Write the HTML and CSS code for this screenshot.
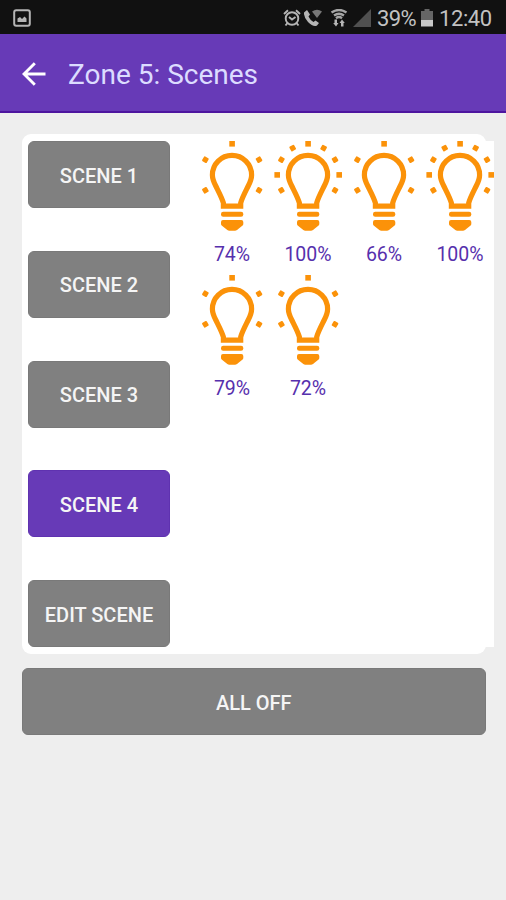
FILE: index.html
```html
<!DOCTYPE html>
<html lang="en">
<head>
    <meta charset="UTF-8">
    <meta name="viewport" content="width=device-width, initial-scale=1.0">
    <title>Zone 5: Scenes</title>
    <link rel="stylesheet" href="styles.css">
</head>
<body>

    <!-- shared bulb shapes -->
    <svg class="sprite" width="0" height="0">
        <symbol id="bulb" viewBox="0 0 76 92">
            <path d="M29.4 65.200V62C28 57 24.500 50.500 21.800 45Q18.400 38.500 18.400 34A19.600 19.600 0 0 1 57.600 34Q57.600 38.500 54.200 45C51.500 50.500 48 57 46.700 62V65.200Z" fill="none" stroke="#fb9209" stroke-width="5.2"/>
            <rect x="27" y="70.700" width="22.300" height="5" rx="2.200"/>
            <path d="M29 79H47.300Q49.300 79 49.300 81V83Q49.300 84 48.300 84.800L43 89Q42 89.800 41 89.800H35.300Q34.300 89.800 33.300 89L28 84.800Q27 84 27 83V81Q27 79 29 79Z"/>
            <rect x="35.300" y="0" width="5.600" height="5.600"/>
            <rect x="8.700" y="16" width="5.400" height="5.400" rx="1" transform="rotate(30 11.400 18.700)"/>
            <rect x="62.300" y="16" width="5.400" height="5.400" rx="1" transform="rotate(60 65 18.700)"/>
            <rect x="8.700" y="46.600" width="5.400" height="5.400" rx="1" transform="rotate(60 11.400 49.300)"/>
            <rect x="62.300" y="46.600" width="5.400" height="5.400" rx="1" transform="rotate(30 65 49.300)"/>
        </symbol>
        <symbol id="bulb-full" viewBox="0 0 76 92">
            <use href="#bulb" width="76" height="92"/>
            <rect x="20" y="4.400" width="5.400" height="5.400" rx="1" transform="rotate(60 22.700 7.100)"/>
            <rect x="50.900" y="4.400" width="5.400" height="5.400" rx="1" transform="rotate(30 53.600 7.100)"/>
            <rect x="4.400" y="31.100" width="5.600" height="5.600"/>
            <rect x="66.400" y="31.100" width="5.600" height="5.600"/>
        </symbol>
    </svg>

    <div class="status-bar">
        <svg class="icon-picture" width="18" height="18" viewBox="0 0 18 18">
            <rect x="1.200" y="1.200" width="15.600" height="15.600" rx="2" fill="none" stroke="#b5b5b5" stroke-width="2"/>
            <path d="M4.500 13V9.500L7 8l2 2 2.500-2.500 2 2V13Z" fill="#b5b5b5"/>
        </svg>
        <div class="status-icons">
            <svg class="icon-alarm" width="18" height="18" viewBox="0 0 18 18" fill="none" stroke="#b5b5b5" stroke-width="1.900">
                <circle cx="9" cy="9.500" r="6.300"/>
                <path d="M1 5 5 1.200M17 5 13 1.200M4.500 14 2.500 16.500M13.500 14l2 2.500M6 8l3 2.500L12.500 8"/>
            </svg>
            <svg class="icon-call" width="18" height="18" viewBox="0 0 18 18">
                <path d="M0 3.500 3 1 6 5.500 4.500 7.500Q6 11 9.500 13L11.500 11.500 15 14 13 16.500Q9.500 18.500 4 13 -.500 8 0 3.500Z" fill="#b5b5b5"/>
                <path d="M8 2.500Q13 -1 18 2.500L13 9Z" fill="#777"/>
            </svg>
            <svg class="icon-wifi" width="18" height="18" viewBox="0 0 18 18">
                <path d="M1.500 3.500Q9 -1.500 16.500 3.500M4 6.500Q9 3 14 6.500M6 9.200Q9 7 12 9.200" fill="none" stroke="#a5a5a5" stroke-width="2.400"/>
                <path d="M7 10.500V14H8.500L6 17.500 3.200 14H4.500V10.500ZM11 17.500V14H9.500L12 10.500 14.800 14H13.500V17.500Z" fill="#b5b5b5"/>
            </svg>
            <svg class="icon-signal" width="18" height="18" viewBox="0 0 18 18">
                <path d="M18 0V18H0Z" fill="#505050"/>
            </svg>
            <span class="battery-text">39%</span>
            <svg class="icon-battery" width="12" height="18" viewBox="0 0 12 18">
                <path d="M3.500 0H8.500V2H12V11H0V2H3.500Z" fill="#666"/>
                <path d="M0 11H12V17.500H0Z" fill="#c8c8c8"/>
            </svg>
            <span class="clock">12:40</span>
        </div>
    </div>

    <header>
        <svg class="back-arrow" width="24" height="24" viewBox="0 0 24 24" fill="none" stroke="#fff" stroke-width="2.900">
            <path d="M12.800 1.200 2 12 12.800 22.800M2 12H23.500"/>
        </svg>
        <h1>Zone 5: Scenes</h1>
    </header>

    <main>
        <section class="card">
            <div class="scene-list">
                <button class="scene-button">SCENE 1</button>
                <button class="scene-button">SCENE 2</button>
                <button class="scene-button">SCENE 3</button>
                <button class="scene-button active">SCENE 4</button>
                <button class="scene-button">EDIT SCENE</button>
            </div>
            <div class="lights">
                <div class="light"><svg class="bulb"><use href="#bulb"/></svg><p>74%</p></div>
                <div class="light"><svg class="bulb"><use href="#bulb-full"/></svg><p>100%</p></div>
                <div class="light"><svg class="bulb"><use href="#bulb"/></svg><p>66%</p></div>
                <div class="light"><svg class="bulb"><use href="#bulb-full"/></svg><p>100%</p></div>
                <div class="light"><svg class="bulb"><use href="#bulb"/></svg><p>79%</p></div>
                <div class="light"><svg class="bulb"><use href="#bulb"/></svg><p>72%</p></div>
            </div>
        </section>
        <button class="all-off">ALL OFF</button>
    </main>

</body>
</html>
```
FILE: styles.css
```css
* {
    box-sizing: border-box;
}

body {
    font-family: Roboto, sans-serif;
    margin: 0;
    min-height: 900px;
    background-color: #eee;
}

.sprite {
    display: block;
}

.status-bar {
    display: flex;
    justify-content: space-between;
    align-items: center;
    height: 34px;
    padding: 2px 13px 0;
    background-color: #111;
    color: #c2c2c2;
}

.status-icons {
    display: flex;
    align-items: center;
    font-size: 22px;
    line-height: 32px;
}

.icon-call {
    margin-left: 3px;
}

.icon-wifi {
    margin-left: 8px;
}

.icon-signal {
    margin-left: 5px;
}

.battery-text {
    width: 39px;
    margin-left: 6px;
    padding-top: 2px;
    letter-spacing: -0.6px;
    white-space: nowrap;
}

.icon-battery {
    margin-left: 5px;
}

.clock {
    width: 54px;
    margin-left: 6px;
    padding-top: 2px;
    letter-spacing: -0.4px;
    white-space: nowrap;
}

header {
    display: flex;
    align-items: center;
    height: 79px;
    padding: 2px 22px 0;
    background-color: #673ab7;
    border-bottom: 2px solid #4d159f;
}

h1 {
    margin: 0 0 0 22px;
    padding-top: 2px;
    color: #dcdcff;
    font-size: 28px;
    font-weight: 400;
    line-height: 36px;
}

main {
    padding: 21px 20px 0 21.5px;
}

.card {
    display: flex;
    width: 464.5px;
    height: 520px;
    padding: 7px 7px 7px 6.5px;
    background-color: #fff;
    border-radius: 9px;
}

.scene-list {
    display: flex;
    flex: none;
    flex-direction: column;
    justify-content: space-between;
    width: 142px;
}

button {
    padding: 2px 0 0;
    border: 1px solid #797979;
    border-radius: 6px;
    background-color: #808080;
    color: #f5f5f5;
    font-family: inherit;
    font-size: 20px;
    font-weight: 500;
}

.scene-button {
    height: 67px;
}

.scene-button.active {
    background-color: #673ab7;
    border-color: #5f32b0;
}

/* runs a little past the right edge of the card */
.lights {
    display: grid;
    flex: none;
    grid-template-columns: repeat(4, 76px);
    grid-auto-rows: 133.5px;
    width: 324px;
    padding-left: 24px;
    background-color: #fff;
    overflow: hidden;
}

.bulb {
    display: block;
    width: 76px;
    height: 92px;
    fill: #fb9209;
}

.light p {
    margin: 9px 0 0;
    color: #5630ad;
    font-size: 19.5px;
    line-height: 26px;
    text-align: center;
}

.all-off {
    display: block;
    width: 464.5px;
    height: 67px;
    margin-top: 14px;
}
```
